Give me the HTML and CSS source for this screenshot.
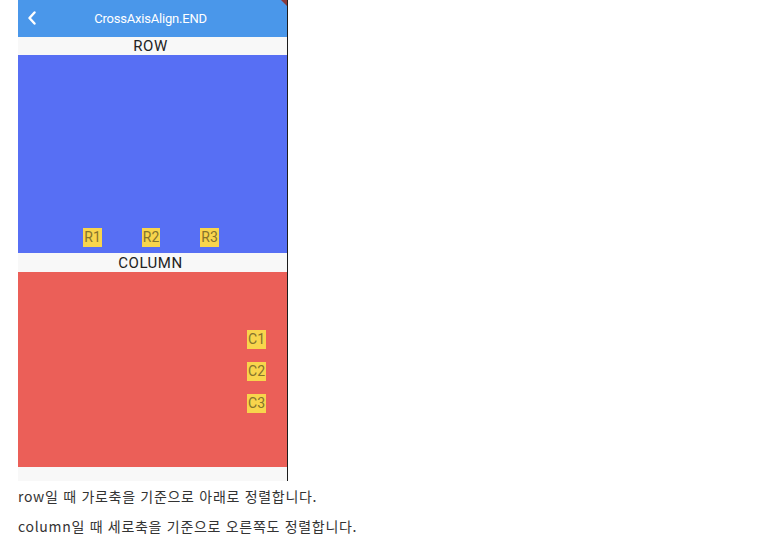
FILE: index.html
```html
<!DOCTYPE html>
<html lang="ko">
<head>
<meta charset="utf-8">
<link rel="stylesheet" href="styles.css">
</head>
<body>
<div class="page">
  <div class="phone">
    <div class="appbar">
      <svg class="back" width="10" height="14" viewBox="0 0 10 14"><path d="M7.5 1.5 L2.5 7 L7.5 12.5" fill="none" stroke="#fff" stroke-width="2.4" stroke-linecap="round" stroke-linejoin="round"/></svg>
      <span class="title">CrossAxisAlign.END</span>
      <span class="banner"></span>
    </div>
    <div class="label row-label">ROW</div>
    <div class="row-area">
      <span class="box">R1</span>
      <span class="box">R2</span>
      <span class="box">R3</span>
    </div>
    <div class="label col-label">COLUMN</div>
    <div class="col-area">
      <span class="box">C1</span>
      <span class="box">C2</span>
      <span class="box">C3</span>
    </div>
    <div class="foot"></div>
  </div>
  <p class="desc">row일 때 가로축을 기준으로 아래로 정렬합니다.</p>
  <p class="desc">column일 때 세로축을 기준으로 오른쪽도 정렬합니다.</p>
</div>
</body>
</html>
```
FILE: styles.css
```css
html, body {
  margin: 0;
  padding: 0;
  background: #ffffff;
}
.page {
  padding-left: 18px;
  font-family: Roboto, "Liberation Sans", sans-serif;
}
.phone {
  width: 269px;
  border-right: 1px solid #1c1c1c;
  background: #f8f8f8;
  display: flex;
  flex-direction: column;
}
.appbar {
  position: relative;
  height: 37px;
  background: #4a97ea;
  display: flex;
  align-items: center;
  justify-content: center;
  overflow: hidden;
  padding-right: 4px;
}
.back {
  position: absolute;
  left: 9px;
  top: 11px;
}
.title {
  color: #ffffff;
  font-size: 13px;
  letter-spacing: -0.2px;
  margin-top: -1px;
}
.banner {
  position: absolute;
  right: 0;
  top: 0;
  width: 0;
  height: 0;
  border-top: 6px solid #8a3a3a;
  border-left: 6px solid transparent;
}
.label {
  text-align: center;
  font-size: 15px;
  letter-spacing: 0.5px;
  color: #222222;
  background: #f8f8f8;
  padding-right: 4px;
}
.row-label {
  height: 18px;
  line-height: 19px;
}
.col-label {
  height: 19px;
  line-height: 20px;
}
.row-area {
  height: 198px;
  box-sizing: border-box;
  background: #576ff4;
  display: flex;
  align-items: flex-end;
  justify-content: center;
  gap: 40px;
  padding-bottom: 6px;
  padding-right: 3px;
}
.col-area {
  height: 195px;
  box-sizing: border-box;
  background: #eb5f58;
  display: flex;
  flex-direction: column;
  align-items: flex-end;
  justify-content: center;
  gap: 13px;
  padding-right: 21px;
  padding-top: 4px;
}
.box {
  display: block;
  background: #f8d54c;
  color: #85732c;
  font-size: 14px;
  line-height: 19px;
  height: 19px;
  padding: 0 1px;
}
.foot {
  height: 14px;
  background: #f8f8f8;
}
.desc {
  margin: 0;
  font-family: "Noto Sans CJK KR", sans-serif;
  font-size: 14px;
  letter-spacing: 0.7px;
  line-height: 30px;
  color: #333333;
}
```
